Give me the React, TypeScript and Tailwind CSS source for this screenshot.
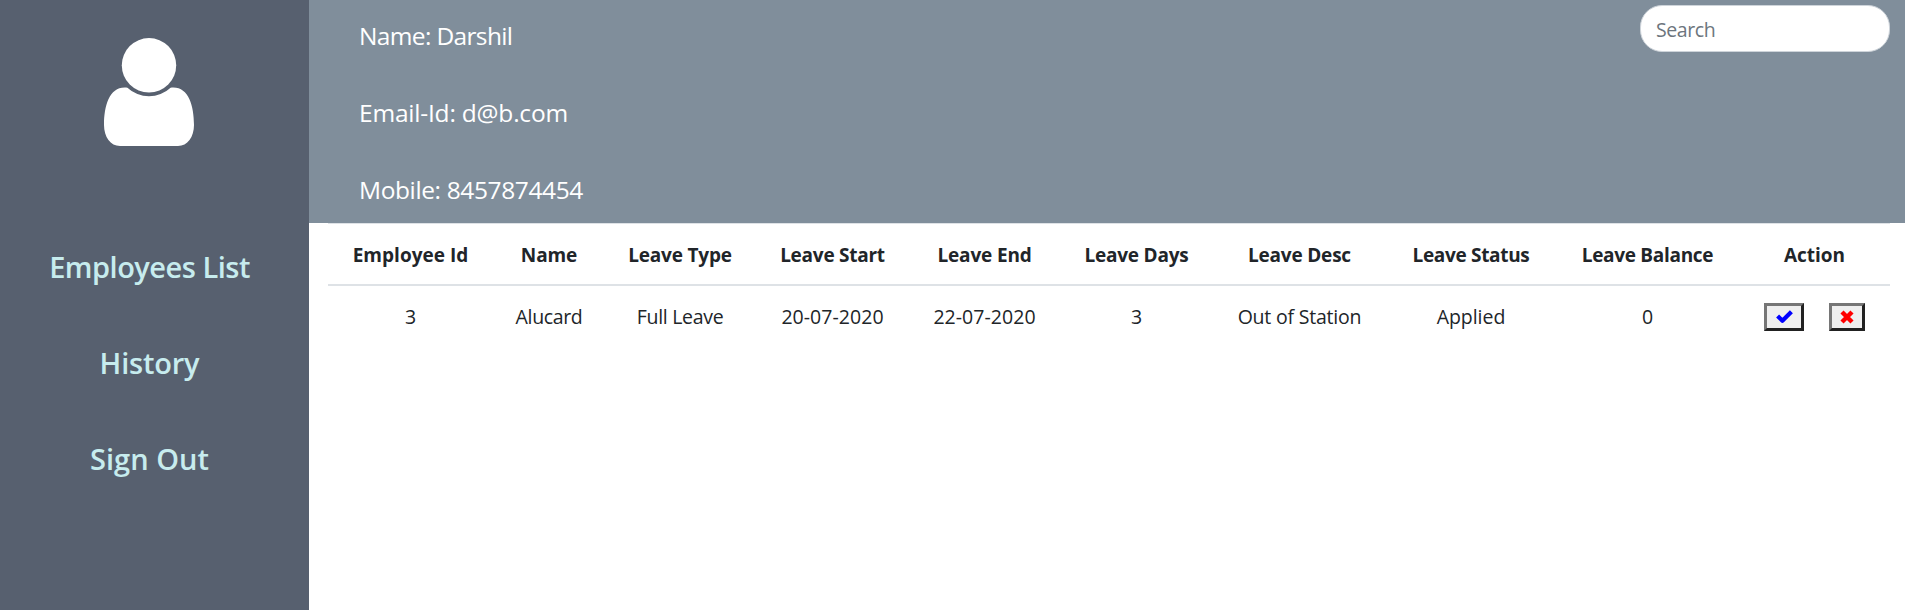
type Column = { title: string; value: string; width: string; titleTracking: string; valueTracking: string };

const columns: Column[] = [
  { title: "Employee Id", value: "3", width: "w-[165px]", titleTracking: "tracking-[0.02px]", valueTracking: "" },
  { title: "Name", value: "Alucard", width: "w-[112px]", titleTracking: "tracking-[-0.1px]", valueTracking: "tracking-[-0.35px]" },
  { title: "Leave Type", value: "Full Leave", width: "w-[150px]", titleTracking: "tracking-[-0.2px]", valueTracking: "tracking-[-0.3px]" },
  { title: "Leave Start", value: "20-07-2020", width: "w-[155px]", titleTracking: "tracking-[-0.25px]", valueTracking: "tracking-[0.05px]" },
  { title: "Leave End", value: "22-07-2020", width: "w-[149px]", titleTracking: "tracking-[-0.15px]", valueTracking: "tracking-[0.05px]" },
  { title: "Leave Days", value: "3", width: "w-[155px]", titleTracking: "tracking-[-0.2px]", valueTracking: "" },
  { title: "Leave Desc", value: "Out of Station", width: "w-[171px]", titleTracking: "tracking-[-0.2px]", valueTracking: "tracking-[-0.2px]" },
  { title: "Leave Status", value: "Applied", width: "w-[172px]", titleTracking: "tracking-[-0.32px]", valueTracking: "tracking-[-0.05px]" },
  { title: "Leave Balance", value: "0", width: "w-[181px]", titleTracking: "tracking-[-0.3px]", valueTracking: "" },
];

const links = [
  { label: "Employees List", tracking: "tracking-[-0.5px]" },
  { label: "History", tracking: "tracking-[-0.2px]" },
  { label: "Sign Out", tracking: "tracking-[0.05px]" },
];

const profile = [
  { text: "Name: Darshil", tracking: "tracking-[-0.65px]" },
  { text: "Email-Id: d@b.com", tracking: "tracking-[-0.2px]" },
  { text: "Mobile: 8457874454", tracking: "tracking-[-0.38px]" },
];

function Avatar() {
  return (
    <svg className="ml-[104px] block h-[108px] w-[90px]" viewBox="0 0 90 108" fill="#fff">
      <circle cx="45" cy="27.3" r="27.2" />
      <path d="M23.4 49.800 C6 47.500 0 67 0 87 C0 99 6.500 108 16 108 H74 C83.500 108 90 99 90 87 C90 67 84 47.500 66.600 49.800 A31.600 31.600 0 0 1 23.400 49.800 Z" />
    </svg>
  );
}

export default function App() {
  return (
    <div className="flex h-[610px] w-full overflow-hidden bg-white font-['Open_Sans',sans-serif] text-[#212529]">
      <aside className="w-[309px] shrink-0 bg-[#57606f] pt-[38px]">
        <Avatar />
        <nav className="mt-[73px] flex flex-col">
          {links.map((l) => (
            <a
              key={l.label}
              href="#"
              className={`block h-24 w-[299px] text-center text-[29px] leading-[96px] font-semibold text-[#c7ecee] ${l.tracking}`}
            >
              {l.label}
            </a>
          ))}
        </nav>
      </aside>
      <div className="flex min-w-0 flex-1 flex-col">
        <header className="flex h-[223px] items-start justify-between bg-[#808e9b] pr-[15px] pl-[50px]">
          <div className="-mt-[3px]">
            {profile.map((p) => (
              <p key={p.text} className={`h-[77px] text-[24.5px] leading-[77px] whitespace-nowrap text-white ${p.tracking}`}>
                {p.text}
              </p>
            ))}
          </div>
          <input
            placeholder="Search"
            className="mt-[5px] h-[47px] w-[250px] rounded-[22px] border border-[#ced4da] bg-white px-[15px] pt-[2px] text-[19.5px] tracking-[-0.4px] outline-none placeholder:text-[#6c757d]"
          />
        </header>
        <main className="pl-[19px]">
          <table className="w-[1562px] table-fixed border-separate border-spacing-0 text-center text-[19.5px] whitespace-nowrap">
            <thead className="text-[19px]">
              <tr className="h-[63px]">
                {columns.map((c) => (
                  <th key={c.title} className={`border-t border-b-2 border-[#dee2e6] p-0 pt-[2px] font-bold ${c.width} ${c.titleTracking}`}>
                    {c.title}
                  </th>
                ))}
                <th className="w-[152px] border-t border-b-2 border-[#dee2e6] p-0 pt-[2px] pl-px font-bold">Action</th>
              </tr>
            </thead>
            <tbody>
              <tr className="h-[62px]">
                {columns.map((c) => (
                  <td key={c.title} className={`p-0 ${c.valueTracking}`}>
                    {c.value}
                  </td>
                ))}
                <td className="p-0">
                  <div className="flex justify-center gap-[25px]">
                    <button
                      aria-label="Approve"
                      className="flex h-[28px] w-[40px] items-center justify-center border-[3px] border-t-[#767676] border-r-[#212121] border-b-[#212121] border-l-[#767676] bg-[#efefef]"
                    >
                      <svg className="ml-px h-[14px] w-[17px]" viewBox="0 0 17 14" fill="none" stroke="#00f" strokeWidth="4.200" strokeLinejoin="round">
                        <path d="M1.600 6 6.400 10.800 15.400 1.800" />
                      </svg>
                    </button>
                    <button
                      aria-label="Reject"
                      className="flex h-[28px] w-[36px] items-center justify-center border-[3px] border-t-[#767676] border-r-[#212121] border-b-[#212121] border-l-[#767676] bg-[#efefef]"
                    >
                      <svg className="ml-px h-[14px] w-[14px]" viewBox="0 0 14 14" fill="none" stroke="#f00" strokeWidth="4.400">
                        <path d="M2 2 12 12M12 2 2 12" />
                      </svg>
                    </button>
                  </div>
                </td>
              </tr>
            </tbody>
          </table>
        </main>
      </div>
    </div>
  );
}
